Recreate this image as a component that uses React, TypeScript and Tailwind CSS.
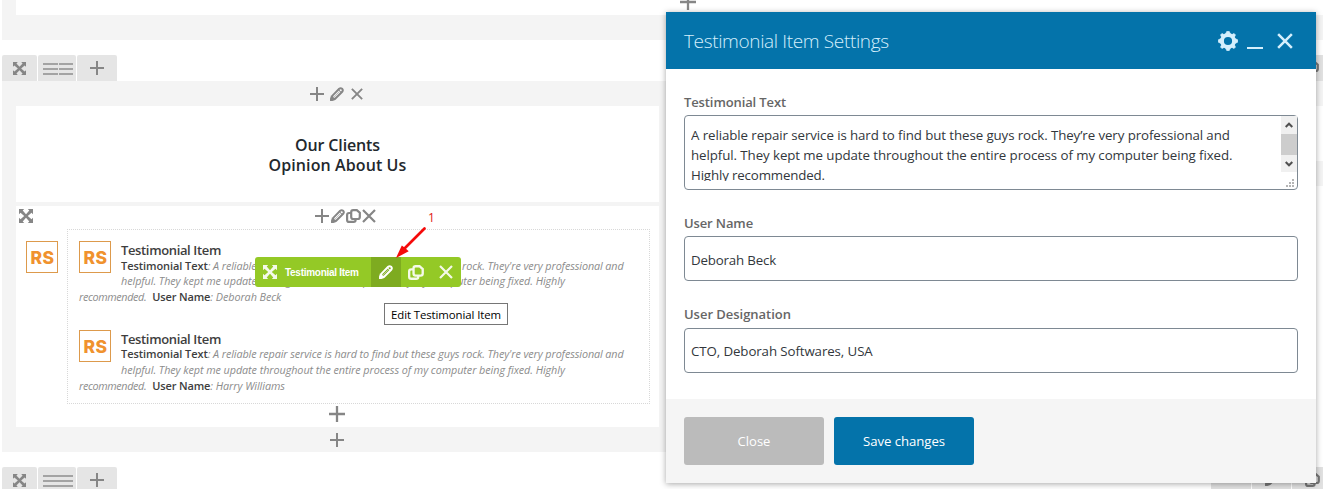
import type { ReactNode } from "react";

type IconProps = { className?: string };

const Move = ({ className = "" }: IconProps) => (
  <svg viewBox="0 0 14 14" className={`shrink-0 fill-current ${className}`}>
    <path d="M0 0H5.2L3.7 1.5 7 5.2 10.3 1.5 8.8 0H14V5.2L12.5 3.7 8.8 7 12.5 10.3 14 8.8V14H8.8L10.3 12.5 7 8.8 3.7 12.5 5.2 14H0V8.8L1.5 10.3 5.2 7 1.5 3.7 0 5.2Z" />
  </svg>
);

const Plus = ({ className = "" }: IconProps) => (
  <svg viewBox="0 0 14 14" className={`shrink-0 fill-current ${className}`}>
    <path d="M6 0H8V6H14V8H8V14H6V8H0V6H6Z" />
  </svg>
);

const Cross = ({ className = "" }: IconProps) => (
  <svg viewBox="0 0 14 14" fill="none" stroke="currentColor" strokeWidth="2.2" className={`shrink-0 ${className}`}>
    <path d="M1 1 13 13M13 1 1 13" />
  </svg>
);

const Pencil = ({ className = "" }: IconProps) => (
  <svg viewBox="0 0 14 14" fill="none" className={`shrink-0 ${className}`}>
    <path d="M1.3 12.7 2.5 8.6 9.2 1.8Q10.6.6 12.2 1.8 13.4 3.4 12.2 4.8L5.4 11.5Z" stroke="currentColor" strokeWidth="2" strokeLinejoin="round" />
    <path d="M0 14 1.4 8.8 5.2 12.6ZM8.2 2.4 11.6 5.8" fill="currentColor" stroke="currentColor" strokeWidth="1" />
    <path d="M3.6 10.4 9.6 4.4" stroke="currentColor" strokeWidth=".5" />
  </svg>
);

const Copy = ({ className = "" }: IconProps) => (
  <svg viewBox="0 0 15 14" fill="none" stroke="currentColor" strokeWidth="2.2" className={`shrink-0 ${className}`}>
    <path d="M5 4H3.1Q1.1 4 1.1 6V10.9Q1.1 12.9 3.1 12.9H7.6Q9.6 12.9 9.6 11V10.2" />
    <path d="M5.2 3.1Q5.2 1.1 7.2 1.1H10.8L13.8 3.8V8Q13.8 10 11.8 10H7.2Q5.2 10 5.2 8Z" />
  </svg>
);

const Gear = ({ className = "" }: IconProps) => (
  <svg viewBox="0 0 20 20" className={`shrink-0 ${className}`}>
    <circle cx="10" cy="10" r="6" fill="none" stroke="currentColor" strokeWidth="3.8" />
    <path
      d="M7.6 3.2 8.8.4H11.2L12.4 3.2ZM7.6 16.8 8.8 19.6H11.2L12.4 16.8ZM3.2 7.6.4 8.8V11.2L3.2 12.4ZM16.8 7.6 19.6 8.8V11.2L16.8 12.4ZM4 6.8 2.6 3.9 3.9 2.6 6.8 4ZM16 6.8 17.4 3.9 16.1 2.6 13.2 4ZM4 13.2 2.6 16.1 3.9 17.4 6.8 16ZM16 13.2 17.4 16.1 16.1 17.4 13.2 16Z"
      fill="currentColor"
      stroke="currentColor"
      strokeWidth=".8"
      strokeLinejoin="round"
    />
  </svg>
);

function Lines({ split }: { split?: boolean }) {
  return (
    <div className={`grid w-[30px] gap-x-px gap-y-[3px] ${split ? "grid-cols-2" : "grid-cols-1"}`}>
      {Array.from({ length: split ? 6 : 3 }, (_, i) => (
        <div key={i} className="h-[2px] bg-[#a3a3a3]" />
      ))}
    </div>
  );
}

function RowTabs({ split }: { split?: boolean }) {
  return (
    <div className="flex h-[26px] gap-px text-[#868686]">
      <div className="flex w-[35px] items-center justify-center rounded-t-[2px] bg-[#e5e5e5]">
        <Move className="size-[13px]" />
      </div>
      <div className="flex w-[38px] items-center justify-center rounded-t-[2px] bg-[#e5e5e5] pt-px pl-[2px]">
        <Lines split={split} />
      </div>
      <div className="flex w-[40px] items-center justify-center rounded-t-[2px] bg-[#e5e5e5]">
        <Plus className="size-[14px]" />
      </div>
    </div>
  );
}

function Logo({ className = "" }: IconProps) {
  return (
    <div
      className={`flex size-8 shrink-0 items-center justify-center border border-[#dd9a4c] bg-white pt-px font-[Inter,sans-serif] text-[17.5px] leading-none font-extrabold text-[#f0922e] not-italic ${className}`}
    >
      <span className="pl-px tracking-[0.5px]">RS</span>
    </div>
  );
}

function Testimonial({ user }: { user: string }) {
  return (
    <div className="text-[10.8px] leading-[15.6px] whitespace-nowrap text-[#8c8c8c] italic">
      <div className="flex gap-[10px]">
        <Logo />
        <div className="h-[48px] pt-px">
          <div className="h-[15.5px] text-[13px] leading-[16px] font-semibold tracking-[-0.36px] text-[#3e3e3e] not-italic">Testimonial Item</div>
          <div className="tracking-[-0.1px]">
            <b className="text-[11px] font-semibold tracking-[-0.07px] text-[#3e3e3e] not-italic">Testimonial Text</b>: A reliable repair service is hard to find but these guys rock. They're very professional and
          </div>
          <div className="tracking-[-0.065px]">helpful. They kept me update throughout the entire process of my computer being fixed. Highly</div>
        </div>
      </div>
      <div className="tracking-[-0.06px]">
        <span className="tracking-[-0.36px]">recommended.</span>
        <b className="ml-[6px] text-[11px] font-semibold tracking-[-0.14px] text-[#3e3e3e] not-italic">User Name</b>: {user}
      </div>
    </div>
  );
}

function Field({ label, labelClass, children }: { label: string; labelClass: string; children: ReactNode }) {
  return (
    <div>
      <div className={`text-[13px] leading-[18px] font-semibold text-[#666] ${labelClass}`}>{label}</div>
      {children}
    </div>
  );
}

function Modal() {
  return (
    <section className="absolute top-3 left-[666px] flex h-[471px] w-[650px] flex-col bg-white shadow-[0_1px_6px_rgba(0,0,0,0.35)]">
      <header className="flex h-[57px] shrink-0 items-center bg-[#0473aa] pr-[23px] pl-[18px] text-[#d5effc]">
        <h1 className="flex-1 pt-px text-[19px] font-light tracking-[-0.36px]">Testimonial Item Settings</h1>
        <Gear className="size-5" />
        <div className="mt-[15px] ml-[9px] h-[2px] w-4 bg-current" />
        <Cross className="ml-[14px] size-4" />
      </header>
      <div className="flex flex-1 flex-col px-[18px] pt-6 text-[#32373c]">
        <Field label="Testimonial Text" labelClass="h-[22px] tracking-[-0.11px]">
          <div className="relative flex h-[75px] rounded-[4px] border border-[#7e8993]">
            <div className="mt-[9px] ml-[6px] h-[56px] flex-1 overflow-hidden text-[13.3px] leading-5 whitespace-nowrap">
              <div className="tracking-[-0.09px]">A reliable repair service is hard to find but these guys rock. They’re very professional and</div>
              <div className="tracking-[-0.08px]">helpful. They kept me update throughout the entire process of my computer being fixed.</div>
              <div className="tracking-[-0.15px]">Highly recommended.</div>
            </div>
            <div className="flex h-[56px] w-4 flex-col items-center justify-between bg-[#f0f0f0] text-[#505050]">
              <svg viewBox="0 0 8 6" className="mt-[6px] h-[6px] w-2" fill="none" stroke="currentColor" strokeWidth="2">
                <path d="M.7 5 4 1.7 7.3 5" />
              </svg>
              <div className="h-[21px] w-4 bg-[#cdcdcd]" />
              <svg viewBox="0 0 8 6" className="mb-[5px] h-[6px] w-2" fill="none" stroke="currentColor" strokeWidth="2">
                <path d="M.7 1 4 4.3 7.3 1" />
              </svg>
            </div>
            <svg viewBox="0 0 8 8" className="absolute right-[3px] bottom-[2px] size-2 fill-[#b5b5b5]">
              <path d="M6 0h2v2H6zM3 3h2v2H3zM6 3h2v2H6zM0 6h2v2H0zM3 6h2v2H3zM6 6h2v2H6z" />
            </svg>
          </div>
        </Field>
        <div className="h-6" />
        <Field label="User Name" labelClass="h-[22px] tracking-[-0.12px]">
          <div className="flex h-[45px] items-center rounded-[4px] border border-[#7e8993] px-[6px] pt-[4px] text-[13.3px] tracking-[-0.17px]">Deborah Beck</div>
        </Field>
        <div className="h-6" />
        <Field label="User Designation" labelClass="h-[23px] tracking-[-0.03px]">
          <div className="flex h-[45px] items-center rounded-[4px] border border-[#7e8993] px-[6px] pt-[3px] text-[13.3px] tracking-[-0.1px]">CTO, Deborah Softwares, USA</div>
        </Field>
      </div>
      <footer className="flex h-[84px] shrink-0 gap-[10px] bg-[#f5f5f5] px-[18px] pt-[18px] text-white">
        <button className="h-12 w-[140px] rounded-[3px] bg-[#bbb] pt-[2px] text-[13px]">Close</button>
        <button className="h-12 w-[140px] rounded-[3px] bg-[#0473aa] pt-[2px] text-[13.2px] tracking-[-0.06px]">Save changes</button>
      </footer>
    </section>
  );
}

function ItemControls() {
  return (
    <div className="absolute top-[257px] left-[255px] flex h-[30px] w-[206px] items-center overflow-hidden rounded-[3px] bg-[#94c926] text-white">
      <Move className="ml-2 size-[14px] opacity-90" />
      <span className="ml-2 w-[86px] font-['Liberation_Sans',Arial,sans-serif] text-[10px] font-bold tracking-[-0.28px] whitespace-nowrap">Testimonial Item</span>
      <div className="flex h-full w-[30px] items-center justify-center bg-[#7eab20]">
        <Pencil className="size-[14px]" />
      </div>
      <Copy className="ml-[7px] h-[15px] w-4 opacity-90" />
      <Cross className="ml-[15px] size-[14px] opacity-90" />
    </div>
  );
}

export default function App() {
  return (
    <main className="relative flex h-[489px] w-full flex-col overflow-hidden bg-white pl-[2px] font-['Open_Sans','Noto_Sans',sans-serif]">
      <section className="flex h-10 shrink-0 bg-[#f4f4f4] pl-[14px] text-[#868686]">
        <div className="h-[15px] flex-1 bg-white pl-[664px]">
          <Plus className="-mt-[6px] size-4" />
        </div>
      </section>

      <div className="mt-[15px] flex justify-between">
        <RowTabs split />
        <div className="flex w-[33px] items-center bg-[#e1e1e1] pl-[14px] text-[#777]">
          <Copy className="h-[14px] w-[15px]" />
        </div>
      </div>

      <section className="flex h-[371px] shrink-0">
        <div className="flex w-[665px] flex-col bg-[#f4f4f4] pr-2 pl-[14px] text-[#868686]">
          <div className="flex h-[25px] shrink-0 items-center pl-[294px]">
            <Plus className="size-[14px]" />
            <Pencil className="ml-[6px] size-[14px]" />
            <Cross className="ml-[7px] size-[12px]" />
          </div>
          <div className="flex h-24 shrink-0 flex-col items-center justify-center bg-white pt-[2px] text-[16px] leading-5 font-semibold text-[#23282d]">
            <div className="tracking-[-0.13px]">Our Clients</div>
            <div className="tracking-[0.1px]">Opinion About Us</div>
          </div>
          <div className="mt-1 flex h-[221px] shrink-0 flex-col bg-white">
            <div className="flex h-[23px] shrink-0 pt-[3px] pl-[3px]">
              <Move className="size-[14px]" />
              <div className="ml-[282px] flex">
                <Plus className="size-[14px]" />
                <Pencil className="ml-[2px] size-[14px]" />
                <Copy className="ml-px h-[14px] w-[15px]" />
                <Cross className="ml-px size-[14px]" />
              </div>
            </div>
            <div className="flex">
              <Logo className="mt-3 ml-[10px]" />
              <div className="ml-[9px] h-[175px] w-[583px] border border-dotted border-[#d8d8d8] pt-[11px] pl-[11px]">
                <Testimonial user="Deborah Beck" />
                <div className="h-[25.4px]" />
                <Testimonial user="Harry Williams" />
              </div>
            </div>
            <Plus className="mt-[2px] ml-[313px] size-4" />
          </div>
          <Plus className="mt-[6px] ml-[314px] size-[14px]" />
        </div>
        <div className="flex-1 bg-white">
          <div className="h-[25px] bg-[#f4f4f4]" />
          <div className="h-[55px]" />
          <div className="h-[25px] bg-[#f4f4f4]" />
        </div>
      </section>

      <div className="mt-[15px] flex shrink-0 justify-between">
        <RowTabs />
        <div className="flex h-[26px] w-[112px] gap-px text-[#777]">
          <div className="w-10 bg-[#e1e1e1]" />
          <div className="w-[39px] bg-[#e1e1e1] pt-[5px] pl-[13px]">
            <Pencil className="size-[14px]" />
          </div>
          <div className="flex-1 bg-[#e1e1e1] pt-[6px] pl-[13px]">
            <Copy className="h-[14px] w-[15px]" />
          </div>
        </div>
      </div>

      <Modal />
      <ItemControls />

      <div className="absolute top-[303px] left-[384px] flex h-[22px] w-[124px] items-center justify-center border border-[#767676] bg-white pt-px text-[11.4px] tracking-[-0.09px] whitespace-nowrap text-black">
        Edit Testimonial Item
      </div>
      <svg viewBox="0 0 32 32" className="absolute top-[227px] left-[396px] size-8" fill="#f50a0a">
        <path d="M28.5 1.5 9 21" stroke="#f50a0a" strokeWidth="2.6" strokeLinecap="round" />
        <path d="M0 31 5.8 18.4 8.6 20.4 12.7 24.2Z" />
      </svg>
      <span className="absolute top-[209px] left-[428px] text-[12px] leading-[18px] text-[#e01515]">1</span>
    </main>
  );
}
